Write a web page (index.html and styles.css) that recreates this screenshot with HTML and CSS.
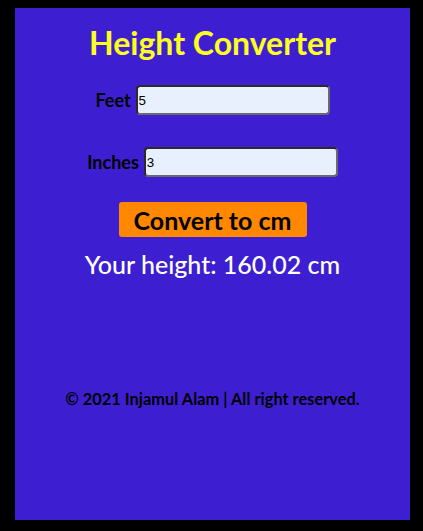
FILE: index.html
```html
<!DOCTYPE html>
<html lang="en">
<head>
<meta charset="utf-8">
<title>Height Converter</title>
<link rel="stylesheet" href="styles.css">
</head>
<body>
<main class="card">
  <h1 class="title">Height Converter</h1>
  <div class="row row-feet">
    <label class="label" for="feet">Feet</label>
    <input class="field" id="feet" type="text" value="5">
  </div>
  <div class="row row-inches">
    <label class="label" for="inches">Inches</label>
    <input class="field" id="inches" type="text" value="3">
  </div>
  <button class="convert" type="button">Convert to cm</button>
  <p class="result">Your height: 160.02 cm</p>
  <footer class="footer">© 2021 Injamul Alam | All right reserved.</footer>
</main>
</body>
</html>
```
FILE: styles.css
```css
html, body {
  margin: 0;
  padding: 0;
  background: #000;
}
body {
  padding: 8px 13px 11px 15px;
  font-family: Lato, "Noto Sans", sans-serif;
}
.card {
  background: #3d1fd1;
  height: 512px;
  box-sizing: border-box;
  padding-top: 15px;
  display: flex;
  flex-direction: column;
  align-items: center;
}
.title {
  margin: 0;
  font-size: 32px;
  line-height: 40px;
  font-weight: 700;
  color: #ffff1e;
}
.row {
  display: flex;
  align-items: center;
  gap: 5px;
}
.row-feet { margin-top: 22px; }
.row-inches { margin-top: 32px; }
.label {
  font-size: 18px;
  font-weight: 700;
  color: #000;
}
.field {
  width: 194px;
  height: 30px;
  box-sizing: border-box;
  margin: 0;
  padding: 1px 1px;
  background: #e8f0fe;
  border: 2px solid;
  border-color: #2a2a2a #6a6a6a #6a6a6a #2a2a2a;
  border-radius: 4px;
  font-family: "Liberation Sans", Arial, sans-serif;
  font-size: 13.33px;
  color: #000;
}
.convert {
  margin-top: 25px;
  width: 188px;
  height: 35px;
  padding: 0;
  border: none;
  border-radius: 3px;
  background: #ff8800;
  color: #000;
  font-family: inherit;
  font-size: 25px;
  font-weight: 700;
}
.result {
  margin: 12px 0 0;
  font-size: 25px;
  line-height: 30px;
  font-weight: 500;
  color: #fff;
}
.footer {
  margin-top: 110px;
  font-size: 16.4px;
  line-height: 20px;
  font-weight: 700;
  color: #000;
}
```
